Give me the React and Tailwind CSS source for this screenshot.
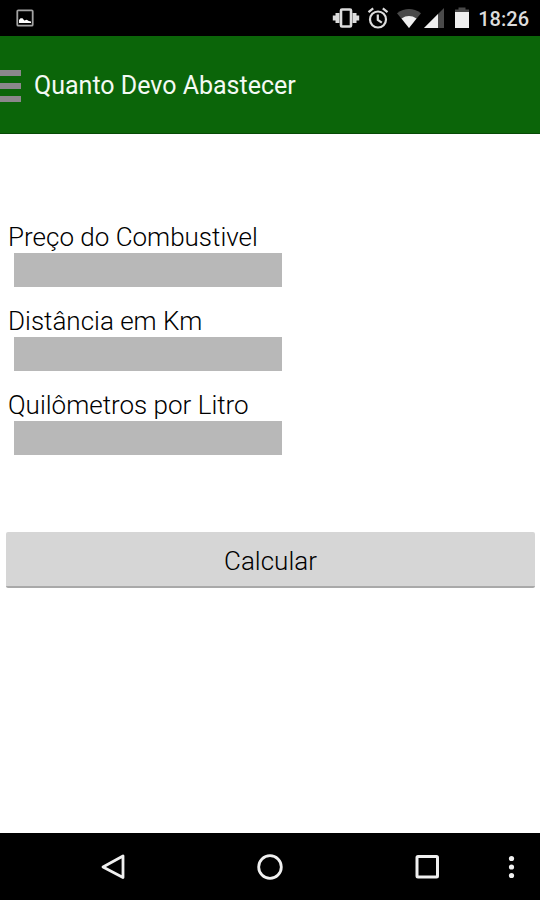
import { useState } from "react";

const fields = [
  { id: "preco", label: "Preço do Combustivel" },
  { id: "distancia", label: "Distância em Km" },
  { id: "consumo", label: "Quilômetros por Litro" },
];

function StatusBar() {
  return (
    <div className="flex h-9 items-center bg-black pl-4 pr-[11px] text-[#dcdcdc]">
      <svg className="h-[18px] w-[18px]" viewBox="0 0 18 18" fill="none">
        <rect x="1.3" y="1.3" width="15.4" height="15.4" rx="1" stroke="#a3a3a3" strokeWidth="1.8" />
        <path d="M3 14v-3l1.500-1.800h2l1.800 2.200 2.500-.6 2 1.200 2.200.4V14z" fill="#fff" />
      </svg>

      <div className="ml-auto flex items-center">
        {/* Vibrar */}
        <svg className="h-6 w-7" viewBox="0 0 28 24" fill="currentColor">
          <path d="M.8 9.500h2.700v5H.8zM3.500 7H7.500v10H3.500zM20.500 7h4v10h-4zM24.500 9.500h2.700v5h-2.700z" />
          <rect x="9" y="3.500" width="10" height="17" fill="none" stroke="currentColor" strokeWidth="2.600" rx="1" />
        </svg>

        {/* Alarme */}
        <svg className="ml-[7px] h-6 w-[22px]" viewBox="0 0 22 24" fill="none" stroke="currentColor" strokeWidth="2.200">
          <circle cx="11" cy="13.500" r="8" />
          <path d="M10.800 8.500v5.500l4 2.600M1.500 6.200l4.700-3.900M20.500 6.200l-4.700-3.900" />
        </svg>

        {/* Wi-Fi */}
        <svg className="ml-[7px] h-6 w-[26px]" viewBox="0 0 26 24">
          <path d="M1 7.200Q13-1 25 7.200L13 22z" fill="#4a4a4a" />
          <path d="M5.500 12.500Q13 7.600 20.500 12.500L13 22z" fill="#f0f0f0" />
        </svg>

        {/* Sinal */}
        <svg className="ml-[2px] h-6 w-5" viewBox="0 0 20 24">
          <path d="M0 22L20 2v20z" fill="#4a4a4a" />
          <path d="M0 22L14 8v14z" fill="#f0f0f0" />
        </svg>

        {/* Bateria */}
        <svg className="ml-[11px] h-6 w-[14px]" viewBox="0 0 14 24">
          <path d="M0 3.500h3.500v-2h7v2H14V6H0z" fill="#4a4a4a" />
          <path d="M0 6h14v16H0z" fill="#f0f0f0" />
        </svg>

        <span className="ml-[9px] pt-[2px] text-[20px] leading-6 font-medium">18:26</span>
      </div>
    </div>
  );
}

function Header() {
  return (
    <header className="flex h-[98px] items-center gap-[13px] border-b border-[#064a06] bg-[#0b6509] pt-[3px]">
      <button type="button" aria-label="Menu" className="flex w-[21px] flex-col gap-[7px]">
        <span className="h-[6px] w-full bg-[#8b878b]" />
        <span className="h-[6px] w-full bg-[#8b878b]" />
        <span className="h-[6px] w-full bg-[#8b878b]" />
      </button>
      <h1 className="text-[25px] leading-8 text-[#f4faf4]">Quanto Devo Abastecer</h1>
    </header>
  );
}

function NavBar() {
  return (
    <nav className="flex h-[67px] items-center bg-black pl-9 text-[#f0f0f0]">
      <button type="button" aria-label="Voltar" className="flex flex-1 justify-center">
        <svg className="h-7 w-7" viewBox="0 0 28 28" fill="none" stroke="currentColor" strokeWidth="2.800">
          <path d="M23 3v21.500L3 14z" strokeLinejoin="round" />
        </svg>
      </button>
      <button type="button" aria-label="Início" className="flex flex-1 justify-center">
        <svg className="h-7 w-7" viewBox="0 0 28 28" fill="none" stroke="currentColor" strokeWidth="2.800">
          <circle cx="14" cy="14" r="11.300" />
        </svg>
      </button>
      <button type="button" aria-label="Recentes" className="flex flex-1 justify-center">
        <svg className="h-7 w-7" viewBox="0 0 28 28" fill="none" stroke="currentColor" strokeWidth="3">
          <rect x="5" y="3.500" width="20.500" height="20.500" rx="1" />
        </svg>
      </button>
      <button type="button" aria-label="Mais opções" className="w-9">
        <svg className="h-7 w-[14px]" viewBox="0 0 14 28" fill="currentColor">
          <circle cx="7.500" cy="5.500" r="2.600" />
          <circle cx="7.500" cy="14" r="2.600" />
          <circle cx="7.500" cy="22.500" r="2.600" />
        </svg>
      </button>
    </nav>
  );
}

export default function App() {
  const [values, setValues] = useState({ preco: "", distancia: "", consumo: "" });

  return (
    <div className="flex min-h-screen flex-col bg-white font-[Roboto,sans-serif]">
      <StatusBar />
      <Header />

      <main className="flex-1 pt-[87px] pl-[6px] pr-[5px]">
        <form onSubmit={(e) => e.preventDefault()}>
          <div className="flex flex-col gap-[18px]">
            {fields.map(({ id, label }) => (
              <div key={id} className="flex flex-col items-start">
                <label htmlFor={id} className="pl-[2px] text-[26px] leading-8 font-light text-black">
                  {label}
                </label>
                <input
                  id={id}
                  type="text"
                  inputMode="decimal"
                  value={values[id]}
                  onChange={(e) => setValues({ ...values, [id]: e.target.value })}
                  className="ml-2 h-[34px] w-[268px] max-w-full bg-[#b8b8b8] px-2 text-xl outline-none"
                />
              </div>
            ))}
          </div>

          {/* Botão */}
          <button
            type="submit"
            className="mt-[77px] h-14 w-full rounded-[2px] border-b-2 border-[#a9a9a9] bg-[#d6d6d6] pt-1 text-[26px] leading-8 font-light text-black"
          >
            Calcular
          </button>
        </form>
      </main>

      <NavBar />
    </div>
  );
}
